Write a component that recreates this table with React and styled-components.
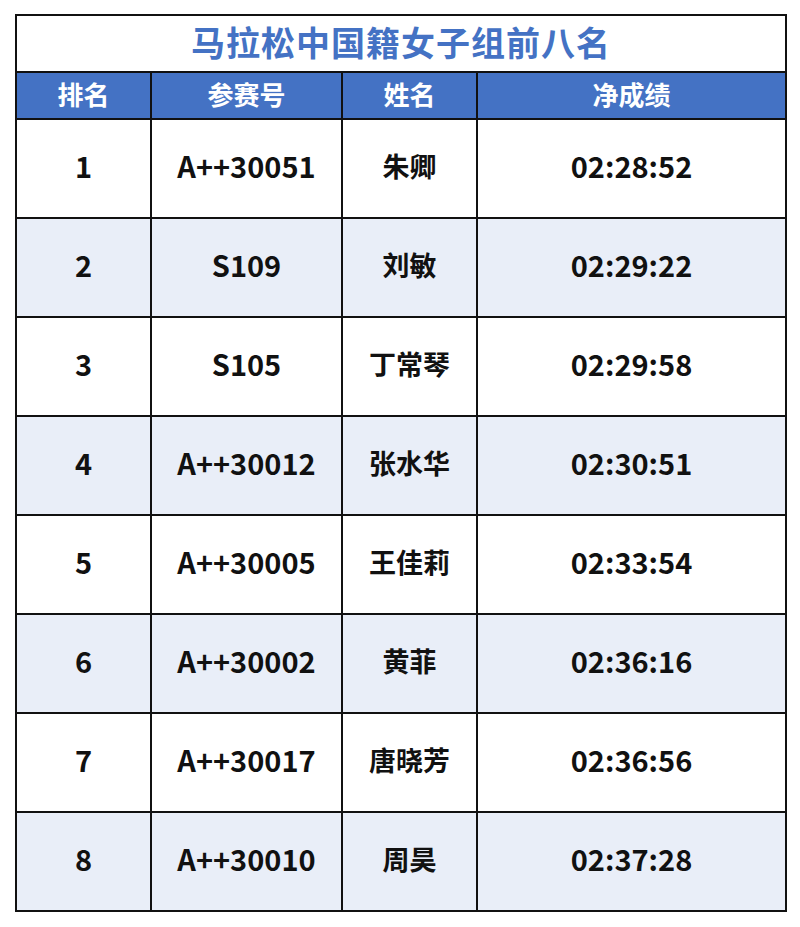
import styled, { createGlobalStyle } from 'styled-components'

const results = [
    { rank: 1, bib: 'A++30051', name: '朱卿', time: '02:28:52' },
    { rank: 2, bib: 'S109', name: '刘敏', time: '02:29:22' },
    { rank: 3, bib: 'S105', name: '丁常琴', time: '02:29:58' },
    { rank: 4, bib: 'A++30012', name: '张水华', time: '02:30:51' },
    { rank: 5, bib: 'A++30005', name: '王佳莉', time: '02:33:54' },
    { rank: 6, bib: 'A++30002', name: '黄菲', time: '02:36:16' },
    { rank: 7, bib: 'A++30017', name: '唐晓芳', time: '02:36:56' },
    { rank: 8, bib: 'A++30010', name: '周昊', time: '02:37:28' },
]

export default function App() {
    return (
        <>
            <GlobalStyle />
            <Page>
                <Table>
                    <colgroup>
                        <col style={{ width: 135 }} />
                        <col style={{ width: 191 }} />
                        <col style={{ width: 135 }} />
                        <col style={{ width: 309 }} />
                    </colgroup>
                    <thead>
                        <tr>
                            <Title colSpan={4}>马拉松中国籍女子组前八名</Title>
                        </tr>
                        <tr>
                            <HeadCell>排名</HeadCell>
                            <HeadCell>参赛号</HeadCell>
                            <HeadCell>姓名</HeadCell>
                            <HeadCell>净成绩</HeadCell>
                        </tr>
                    </thead>
                    <tbody>
                        {results.map(({ rank, bib, name, time }, index) => (
                            <Row key={rank} striped={index % 2 === 1}>
                                <NumCell>{rank}</NumCell>
                                <NumCell>{bib}</NumCell>
                                <NameCell>{name}</NameCell>
                                <NumCell>{time}</NumCell>
                            </Row>
                        ))}
                    </tbody>
                </Table>
            </Page>
        </>
    )
}

const GlobalStyle = createGlobalStyle`
    body {
        margin: 0;
        background: #ffffff;
        font-family: "Noto Sans CJK SC", "Noto Sans", sans-serif;
    }
`

const Page = styled.div`
    padding: 14px 15px;
`

const Table = styled.table`
    width: 770px;
    table-layout: fixed;
    border-collapse: collapse;
    border: 2px solid #111;
    color: #111;
    text-align: center;

    td, th {
        border: 2px solid #111;
        padding: 0;
        line-height: 1;
    }
`

const Title = styled.th`
    height: 51px;
    padding-bottom: 4px !important;
    font-size: 34px;
    font-weight: 700;
    letter-spacing: 1px;
    color: #4472c4;
    background: #ffffff;
`

const HeadCell = styled.th`
    height: 41px;
    padding-bottom: 4px !important;
    font-size: 26px;
    font-weight: 700;
    color: #ffffff;
    background: #4472c4;
`

const Row = styled.tr`
    height: 99px;
    background: ${({ striped }) => striped ? '#e9eef8' : '#ffffff'};
`

const NumCell = styled.td`
    padding-bottom: 6px !important;
    font-size: 29px;
    font-weight: 700;
`

const NameCell = styled.td`
    padding-bottom: 6px !important;
    font-size: 27px;
    font-weight: 700;
`
